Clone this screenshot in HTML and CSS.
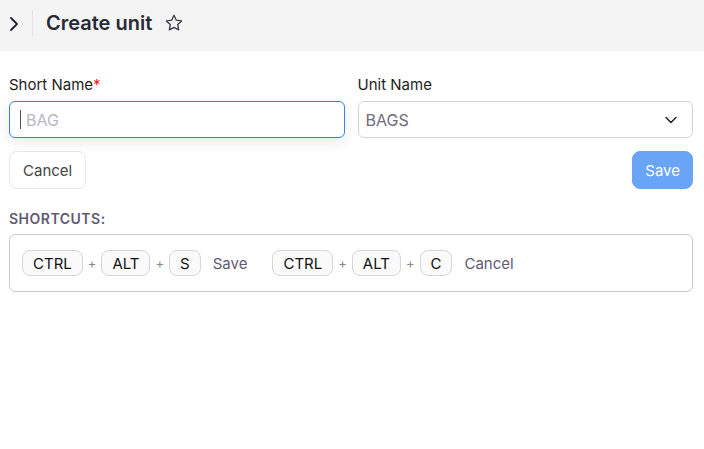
FILE: index.html
```html
<!DOCTYPE html>
<html>
<head>
  <title>Create unit</title>
  <link rel="stylesheet" href="styles.css">
</head>
<body>
  <div class="header">
    <span class="chevron">
      <svg width="12" height="16" viewBox="0 0 12 16"><path d="M3 2 L9 8 L3 14" fill="none" stroke="#1f2430" stroke-width="1.8" stroke-linecap="round" stroke-linejoin="round"/></svg>
    </span>
    <span class="divider"></span>
    <h1 class="title">Create unit</h1>
    <svg class="star" width="20" height="20" viewBox="0 0 24 24"><path d="M12 2.8l2.8 5.8 6.3.9-4.6 4.4 1.1 6.3L12 17.2l-5.6 3 1.1-6.3-4.6-4.4 6.3-.9z" fill="none" stroke="#3a3d4a" stroke-width="1.6" stroke-linejoin="round"/></svg>
  </div>

  <div class="form">
    <div class="fields">
      <div class="field">
        <label>Short Name<span class="req">*</span></label>
        <div class="input focused"><span class="caret"></span><span class="placeholder">BAG</span></div>
      </div>
      <div class="field">
        <label>Unit Name</label>
        <div class="input select">
          <span class="value">BAGS</span>
          <svg width="14" height="10" viewBox="0 0 14 10"><path d="M2 2.5 L7 7.5 L12 2.5" fill="none" stroke="#222" stroke-width="1.5" stroke-linecap="round" stroke-linejoin="round"/></svg>
        </div>
      </div>
    </div>

    <div class="actions">
      <button class="btn">Cancel</button>
      <button class="btn primary">Save</button>
    </div>

    <div class="shortcuts-label">SHORTCUTS:</div>
    <div class="shortcuts">
      <div class="group">
        <span class="key">CTRL</span><span class="plus">+</span>
        <span class="key">ALT</span><span class="plus">+</span>
        <span class="key">S</span><span class="action">Save</span>
      </div>
      <div class="group">
        <span class="key">CTRL</span><span class="plus">+</span>
        <span class="key">ALT</span><span class="plus">+</span>
        <span class="key">C</span><span class="action">Cancel</span>
      </div>
    </div>
  </div>
</body>
</html>
```

FILE: styles.css
```css
body {
  margin: 0;
  font-family: Inter, 'Noto Sans', sans-serif;
  background: #fff;
  color: #1f1f1f;
}
.header {
  height: 51px;
  background: #f4f4f4;
  display: flex;
  align-items: center;
  padding: 0 0 5px 8px;
  box-sizing: border-box;
}
.chevron {
  display: flex;
  width: 12px;
  margin-top: 1px;
}
.divider {
  width: 1px;
  height: 26px;
  background: #e2e2e2;
  margin: 0 13px 0 12px;
}
.title {
  margin: 0;
  font-size: 20px;
  font-weight: 600;
  color: #262a36;
}
.star {
  margin-left: 12px;
}
.form {
  padding: 25px 11px 0 9px;
}
.fields {
  display: flex;
  gap: 13px;
}
.field {
  flex: 1;
  display: flex;
  flex-direction: column;
}
.field label {
  font-size: 15px;
  color: #1d1d1d;
  margin-bottom: 7px;
  line-height: 18px;
}
.req {
  color: #f01818;
}
.input {
  height: 37px;
  border: 1px solid #d4d4dc;
  border-radius: 6px;
  box-sizing: border-box;
  display: flex;
  align-items: center;
  padding: 0 10px;
  font-size: 16px;
}
.input.focused {
  border-color: #3d7ee6;
  box-shadow: 0 4px 14px rgba(0, 0, 0, 0.09);
}
.caret {
  width: 1px;
  height: 19px;
  background: #555;
  margin-right: 5px;
}
.placeholder {
  color: #b8b7c3;
}
.select {
  justify-content: space-between;
  padding: 0 14px 0 7px;
}
.value {
  color: #6e6b7e;
}
.actions {
  display: flex;
  justify-content: space-between;
  margin-top: 13px;
}
.btn {
  font-family: inherit;
  font-size: 15px;
  height: 38px;
  padding: 0 13px;
  border: 1px solid #e6e6e6;
  border-radius: 8px;
  background: #fff;
  color: #444;
}
.btn.primary {
  background: #69a4f6;
  border-color: #69a4f6;
  color: #fff;
  padding: 0 12px;
}
.shortcuts-label {
  margin-top: 21px;
  font-size: 14px;
  font-weight: 600;
  letter-spacing: 0.5px;
  color: #5f5b73;
}
.shortcuts {
  margin-top: 7px;
  height: 58px;
  border: 1px solid #cccccc;
  border-radius: 6px;
  box-sizing: border-box;
  display: flex;
  align-items: center;
  padding: 0 12px;
  gap: 25px;
}
.group {
  display: flex;
  align-items: center;
}
.key {
  height: 26px;
  box-sizing: border-box;
  border: 1px solid #d6d6d6;
  border-radius: 8px;
  background: #fafafa;
  padding: 0 10px;
  display: flex;
  align-items: center;
  font-size: 15px;
  color: #111;
}
.plus {
  font-size: 13px;
  color: #888;
  margin: 0 5px;
}
.action {
  margin-left: 12px;
  font-size: 15px;
  color: #5f5b75;
}
```
